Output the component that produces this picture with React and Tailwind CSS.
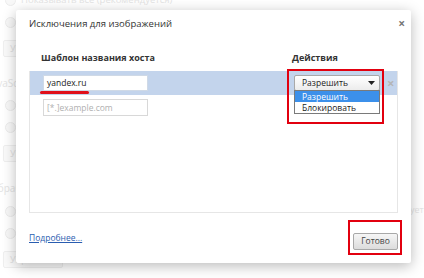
import React from "react";

const Radio = () => (
  <div className="flex items-center h-[22px] pl-[2px]">
    <span className="w-[11px] h-[11px] rounded-full border border-[#ececec] bg-[#f8f8f8]" />
  </div>
);

const GhostButton = ({ label }) => (
  <div className="h-[17px] w-[60px] border border-[#efefef] rounded-[2px] bg-[#fafafa] text-[9px] leading-[15px] pl-[6px] text-[#e0e0e0]">
    {label}
  </div>
);

const App = () => {
  return (
    <div
      className="relative w-[424px] h-[278px] overflow-hidden bg-white text-[#333]"
      style={{ fontFamily: '"Open Sans", "Noto Sans", sans-serif' }}
    >
      {/* faded settings page behind the dialog */}
      <div className="flex flex-col pl-[3px] mt-[-11px] text-[#e4e4e4]">
        <div className="flex items-center gap-[5px]">
          <Radio />
          <span className="text-[9.5px]">Показывать все (рекомендуется)</span>
        </div>
        <Radio />
        <div className="mt-[7px]">
          <GhostButton label="Управление" />
        </div>

        <div className="ml-[-14px] mt-[18px] text-[10px] h-[16px] leading-[16px]">JavaScript</div>
        <div className="mt-[3px]"><Radio /></div>
        <Radio />
        <div className="mt-[7px]">
          <GhostButton label="Управление" />
        </div>

        <div className="ml-[-13px] mt-[18px] text-[10px] h-[16px] leading-[16px]">Обработчики</div>
        <div className="mt-[4px]"><Radio /></div>
        <Radio />
        <div className="mt-[7px]">
          <GhostButton label="Управление" />
        </div>
      </div>
      <div className="absolute left-[410px] top-[203px] text-[9px] text-[#e6e6e6]">уется</div>

      {/* dialog */}
      <div className="absolute left-[16px] top-[10px] w-[395px] h-[253px] bg-white rounded-[2px] shadow-[0_3px_14px_rgba(0,0,0,0.28)] flex flex-col px-[13px]">
        <div className="flex justify-between items-start pt-[6px] h-[42px]">
          <h1 className="text-[9.5px] leading-[16px] text-[#333]">Исключения для изображений</h1>
          <span className="mr-[-7px] mt-[2px] text-[12px] leading-[12px] font-bold text-[#777]">×</span>
        </div>

        <div className="flex text-[9px] font-bold leading-[12px] text-[#333] h-[19px]">
          <div className="w-[263px] pl-[12px]">Шаблон названия хоста</div>
          <div>Действия</div>
        </div>

        <div className="relative h-[142px] border border-[#e6e6e6] border-t-0">
          {/* selected row */}
          <div className="relative flex items-center h-[24px] bg-[#c3d4ec] pl-[13px]">
            <div className="w-[105px] h-[16px] bg-white border border-[#cfd9e6] text-[8.5px] leading-[14px] pl-[3px] text-[#222]">
              yandex.ru
            </div>
            <span className="absolute left-[10px] top-[20px] w-[49px] h-[3px] rounded-full bg-[#e0101a]" />

            <div className="relative ml-[146px] w-[86px] h-[16px] border border-[#a9a9a9] rounded-[2px] bg-gradient-to-b from-white to-[#ececec] flex items-center justify-between pl-[7px] pr-[4px]">
              <span className="text-[8.5px] leading-[14px] text-[#222]">Разрешить</span>
              <svg width="7" height="4" viewBox="0 0 7 4">
                <path d="M0 0 L7 0 L3.5 4 Z" fill="#222" />
              </svg>

              <div className="absolute left-[-1px] top-[14px] w-[86px] border border-[#7a7a7a] bg-white z-10">
                <div className="h-[11px] bg-[#3c90ea] text-white text-[8.5px] leading-[11px] pl-[7px]">Разрешить</div>
                <div className="h-[11px] text-[#222] text-[8.5px] leading-[11px] pl-[7px]">Блокировать</div>
              </div>
            </div>

            <span className="ml-[7px] text-[13px] leading-[13px] font-bold text-[#b5b5b5]">×</span>
          </div>

          {/* new entry row */}
          <div className="flex items-center h-[24px] pl-[13px]">
            <div className="w-[105px] h-[17px] bg-white border border-[#d8d8d8] text-[8.5px] leading-[15px] pl-[3px] text-[#b0b0b0]">
              [*.]example.com
            </div>
          </div>

          <span className="absolute left-[257px] top-[-2px] w-[97px] h-[55px] border-2 border-[#e2000f] z-20" />
        </div>

        <div className="flex justify-between items-center mt-[13px]">
          <a href="#" className="text-[8.5px] leading-[12px] text-[#2a5db0] underline">Подробнее...</a>
          <div className="relative">
            <button className="w-[45px] h-[17px] border border-[#a8a8a8] rounded-[2px] bg-gradient-to-b from-[#f6f6f6] to-[#dcdcdc] text-[8.5px] leading-[14px] text-[#444]">
              Готово
            </button>
            <span className="absolute left-[-5px] top-[-6px] right-[-4px] bottom-[-5px] border-2 border-[#e2000f]" />
          </div>
        </div>
      </div>
    </div>
  );
};

export default App;
